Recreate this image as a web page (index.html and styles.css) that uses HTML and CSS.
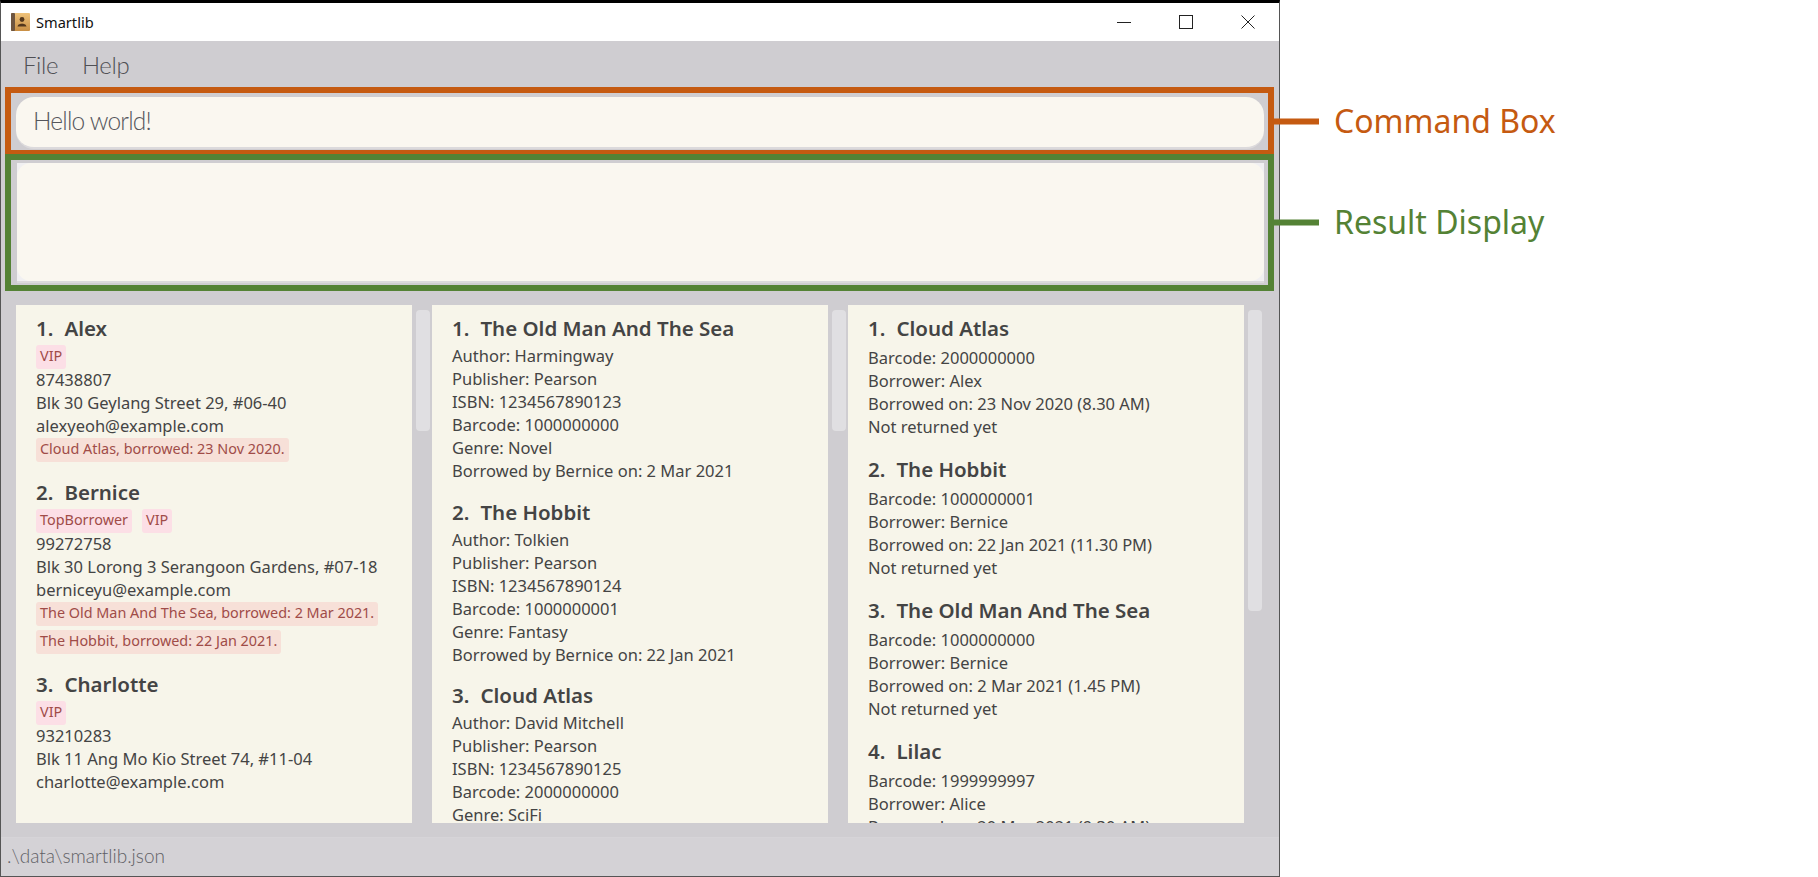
FILE: index.html
```html
<!DOCTYPE html>
<html lang="en">
<head>
    <meta charset="UTF-8">
    <title>Smartlib</title>
    <link rel="stylesheet" href="styles.css">
</head>
<body>
    <div class="window">
        <div class="titlebar">
            <svg class="app-icon" width="19" height="18" viewBox="0 0 19 18">
                <defs>
                    <linearGradient id="cover" x1="0" y1="0" x2="0" y2="1">
                        <stop offset="0" stop-color="#efc27a"/>
                        <stop offset="1" stop-color="#c98f45"/>
                    </linearGradient>
                </defs>
                <rect x="0" y="0" width="19" height="18" rx="1" fill="url(#cover)"/>
                <rect x="0" y="0" width="4" height="18" rx="1" fill="#6e5540"/>
                <circle cx="11" cy="6.5" r="2.4" fill="#53361c"/>
                <path d="M6.5 13.5 C7 11 9.5 11 11 10.5 C12.5 11 15 11 15.5 13.5 Z" fill="#53361c"/>
            </svg>
            <span class="app-name">Smartlib</span>
            <div class="window-controls">
                <svg width="14" height="14" viewBox="0 0 14 14"><path d="M0 7.5H14" stroke="#222" fill="none"/></svg>
                <svg width="14" height="14" viewBox="0 0 14 14"><rect x="0.5" y="0.5" width="13" height="13" stroke="#222" fill="none"/></svg>
                <svg width="14" height="14" viewBox="0 0 14 14"><path d="M0.5 0.5L13.5 13.5M13.5 0.5L0.5 13.5" stroke="#222" fill="none"/></svg>
            </div>
        </div>

        <nav class="menubar">
            <span>File</span>
            <span>Help</span>
        </nav>

        <div class="box box-command">
            <div class="command-field">Hello world!</div>
            <div class="callout callout-command"><i></i><span>Command Box</span></div>
        </div>
        <div class="box box-result">
            <div class="result-back"><div class="result-field"></div></div>
            <div class="callout callout-result"><i></i><span>Result Display</span></div>
        </div>

        <div class="lists">
            <div class="list-col">
                <div class="list-panel">
                    <div class="card">
                        <h2><b>1.</b>Alex</h2>
                        <div class="tags"><span class="tag">VIP</span></div>
                        <p>87438807</p>
                        <p>Blk 30 Geylang Street 29, #06-40</p>
                        <p>alexyeoh@example.com</p>
                        <div class="tags"><span class="tag tag-loan">Cloud Atlas, borrowed: 23 Nov 2020.</span></div>
                    </div>
                    <div class="card">
                        <h2><b>2.</b>Bernice</h2>
                        <div class="tags"><span class="tag">TopBorrower</span><span class="tag">VIP</span></div>
                        <p>99272758</p>
                        <p>Blk 30 Lorong 3 Serangoon Gardens, #07-18</p>
                        <p>berniceyu@example.com</p>
                        <div class="tags"><span class="tag tag-loan">The Old Man And The Sea, borrowed: 2 Mar 2021.</span></div>
                        <div class="tags tags-next"><span class="tag tag-loan">The Hobbit, borrowed: 22 Jan 2021.</span></div>
                    </div>
                    <div class="card">
                        <h2><b>3.</b>Charlotte</h2>
                        <div class="tags"><span class="tag">VIP</span></div>
                        <p>93210283</p>
                        <p>Blk 11 Ang Mo Kio Street 74, #11-04</p>
                        <p>charlotte@example.com</p>
                    </div>
                </div>
                <div class="scroll"><div class="thumb thumb-short"></div></div>
            </div>

            <div class="list-col">
                <div class="list-panel">
                    <div class="card card-book">
                        <h2><b>1.</b>The Old Man And The Sea</h2>
                        <p>Author: Harmingway</p>
                        <p>Publisher: Pearson</p>
                        <p>ISBN: 1234567890123</p>
                        <p>Barcode: 1000000000</p>
                        <p>Genre: Novel</p>
                        <p>Borrowed by Bernice on: 2 Mar 2021</p>
                    </div>
                    <div class="card card-book">
                        <h2><b>2.</b>The Hobbit</h2>
                        <p>Author: Tolkien</p>
                        <p>Publisher: Pearson</p>
                        <p>ISBN: 1234567890124</p>
                        <p>Barcode: 1000000001</p>
                        <p>Genre: Fantasy</p>
                        <p>Borrowed by Bernice on: 22 Jan 2021</p>
                    </div>
                    <div class="card card-book">
                        <h2><b>3.</b>Cloud Atlas</h2>
                        <p>Author: David Mitchell</p>
                        <p>Publisher: Pearson</p>
                        <p>ISBN: 1234567890125</p>
                        <p>Barcode: 2000000000</p>
                        <p>Genre: SciFi</p>
                    </div>
                </div>
                <div class="scroll"><div class="thumb thumb-short"></div></div>
            </div>

            <div class="list-col">
                <div class="list-panel">
                    <div class="card card-loan">
                        <h2><b>1.</b>Cloud Atlas</h2>
                        <p>Barcode: 2000000000</p>
                        <p>Borrower: Alex</p>
                        <p>Borrowed on: 23 Nov 2020 (8.30 AM)</p>
                        <p>Not returned yet</p>
                    </div>
                    <div class="card card-loan">
                        <h2><b>2.</b>The Hobbit</h2>
                        <p>Barcode: 1000000001</p>
                        <p>Borrower: Bernice</p>
                        <p>Borrowed on: 22 Jan 2021 (11.30 PM)</p>
                        <p>Not returned yet</p>
                    </div>
                    <div class="card card-loan">
                        <h2><b>3.</b>The Old Man And The Sea</h2>
                        <p>Barcode: 1000000000</p>
                        <p>Borrower: Bernice</p>
                        <p>Borrowed on: 2 Mar 2021 (1.45 PM)</p>
                        <p>Not returned yet</p>
                    </div>
                    <div class="card card-loan">
                        <h2><b>4.</b>Lilac</h2>
                        <p>Barcode: 1999999997</p>
                        <p>Borrower: Alice</p>
                        <p>Borrowed on: 20 Mar 2021 (9.30 AM)</p>
                    </div>
                </div>
                <div class="scroll"><div class="thumb thumb-long"></div></div>
            </div>
        </div>

        <div class="statusbar">.\data\smartlib.json</div>
    </div>
</body>
</html>
```

FILE: styles.css
```css
html, body {
    margin: 0;
    padding: 0;
    height: 877px;
    overflow: hidden;
    background-color: #ffffff;
}

body {
    font-family: 'Noto Sans', 'Open Sans', sans-serif;
    color: #444444;
}

.window {
    width: 1280px;
    height: 877px;
    box-sizing: border-box;
    border-top: 3px solid #000000;
    border-right: 1px solid #555555;
    border-left: 1px solid #555555;
    border-bottom: 1px solid #555555;
    background-color: #cfcdd1;
    display: flex;
    flex-direction: column;
}

.titlebar {
    height: 38px;
    flex: none;
    background-color: #ffffff;
    display: flex;
    align-items: center;
    padding-left: 10px;
    color: #111111;
    font-size: 14.6px;
}

.app-icon {
    margin-right: 6px;
}

.window-controls {
    margin-left: auto;
    display: flex;
    gap: 48px;
    padding-right: 24px;
}

/* light text: Segoe UI Light in the original, Lato is the nearest in width */
.menubar {
    height: 46px;
    flex: none;
    display: flex;
    align-items: center;
    gap: 24px;
    padding-left: 22px;
    font-family: 'Lato', sans-serif;
    font-size: 24px;
    letter-spacing: -0.4px;
    font-weight: 300;
    color: #505055;
}

.box {
    position: relative;
    margin-left: 4px;
    width: 1269px;
    box-sizing: border-box;
    flex: none;
    border: 6px solid;
}

.box-command {
    height: 67px;
    border-color: #c55a11;
    border-bottom-width: 4px;
    padding: 4px 4px 0 5px;
}

.box-result {
    height: 137px;
    border-color: #548235;
    padding: 3px 4px 2px 6px;
}

.command-field {
    height: 50px;
    border-radius: 18px;
    background-color: #faf7f0;
    border-bottom: 2px solid #dcdadc;
    padding-left: 17px;
    line-height: 47px;
    font-family: 'Lato', sans-serif;
    font-size: 24.5px;
    letter-spacing: -0.8px;
    font-weight: 300;
    color: #55565c;
}

.result-back {
    height: 100%;
    box-sizing: border-box;
    background-color: #f1f0f2;
    border-bottom: 2px solid #dcdadc;
}

.result-field {
    height: 100%;
    border-radius: 14px;
    background-color: #faf7f0;
}

.callout {
    position: absolute;
    left: 100%;
    top: 50%;
    margin-left: 6px;
    display: flex;
    align-items: center;
    transform: translateY(-50%);
    white-space: nowrap;
    font-size: 32px;
}

.callout span {
    padding-bottom: 4px;
}

.callout i {
    width: 45px;
    height: 6px;
    margin-right: 15px;
    background-color: currentColor;
}

.callout-command {
    color: #c55a11;
}

.callout-result {
    color: #548235;
}

.lists {
    flex: 1;
    min-height: 0;
    display: flex;
    padding: 14px 0 14px 15px;
}

.list-col {
    display: flex;
    min-height: 0;
}

.list-panel {
    width: 396px;
    background-color: #f7f5ea;
    overflow: hidden;
    box-sizing: border-box;
    padding: 9px 20px 0 20px;
}

.scroll {
    width: 20px;
    padding: 5px 2px 0 4px;
    box-sizing: border-box;
}

.thumb {
    width: 14px;
    border-radius: 4px;
    background-color: #e0dfe2;
}

.thumb-short {
    height: 121px;
}

.thumb-long {
    height: 301px;
}

.card {
    padding-bottom: 16px;
}

.card-book {
    padding-bottom: 14.5px;
}

.card h2 {
    margin: 0 0 3px 0;
    font-size: 20.5px;
    line-height: 28px;
    font-weight: 600;
}

.card-loan h2 {
    margin-bottom: 5px;
}

.card h2 b {
    font-weight: 600;
    margin-right: 11px;
}

.card p {
    margin: 0;
    padding-bottom: 2px;
    font-size: 16.5px;
    line-height: 21px;
    white-space: nowrap;
}

.tags {
    display: flex;
    gap: 10px;
    height: 24px;
}

.tags-next {
    margin-top: 4px;
}

.tag {
    font-size: 14.4px;
    line-height: 22px;
    padding: 0 4px 2px 4px;
    border-radius: 3px;
    background-color: #fcdfe6;
    color: #a04c48;
    white-space: nowrap;
}

.tag-loan {
    background-color: #f7e0d8;
}

.statusbar {
    height: 39px;
    flex: none;
    box-sizing: border-box;
    border-top: 1px solid #d6d4d8;
    background-color: #d4d2d6;
    padding-left: 6px;
    line-height: 35px;
    font-family: 'Lato', sans-serif;
    font-size: 19px;
    font-weight: 300;
    color: #606065;
}
```
